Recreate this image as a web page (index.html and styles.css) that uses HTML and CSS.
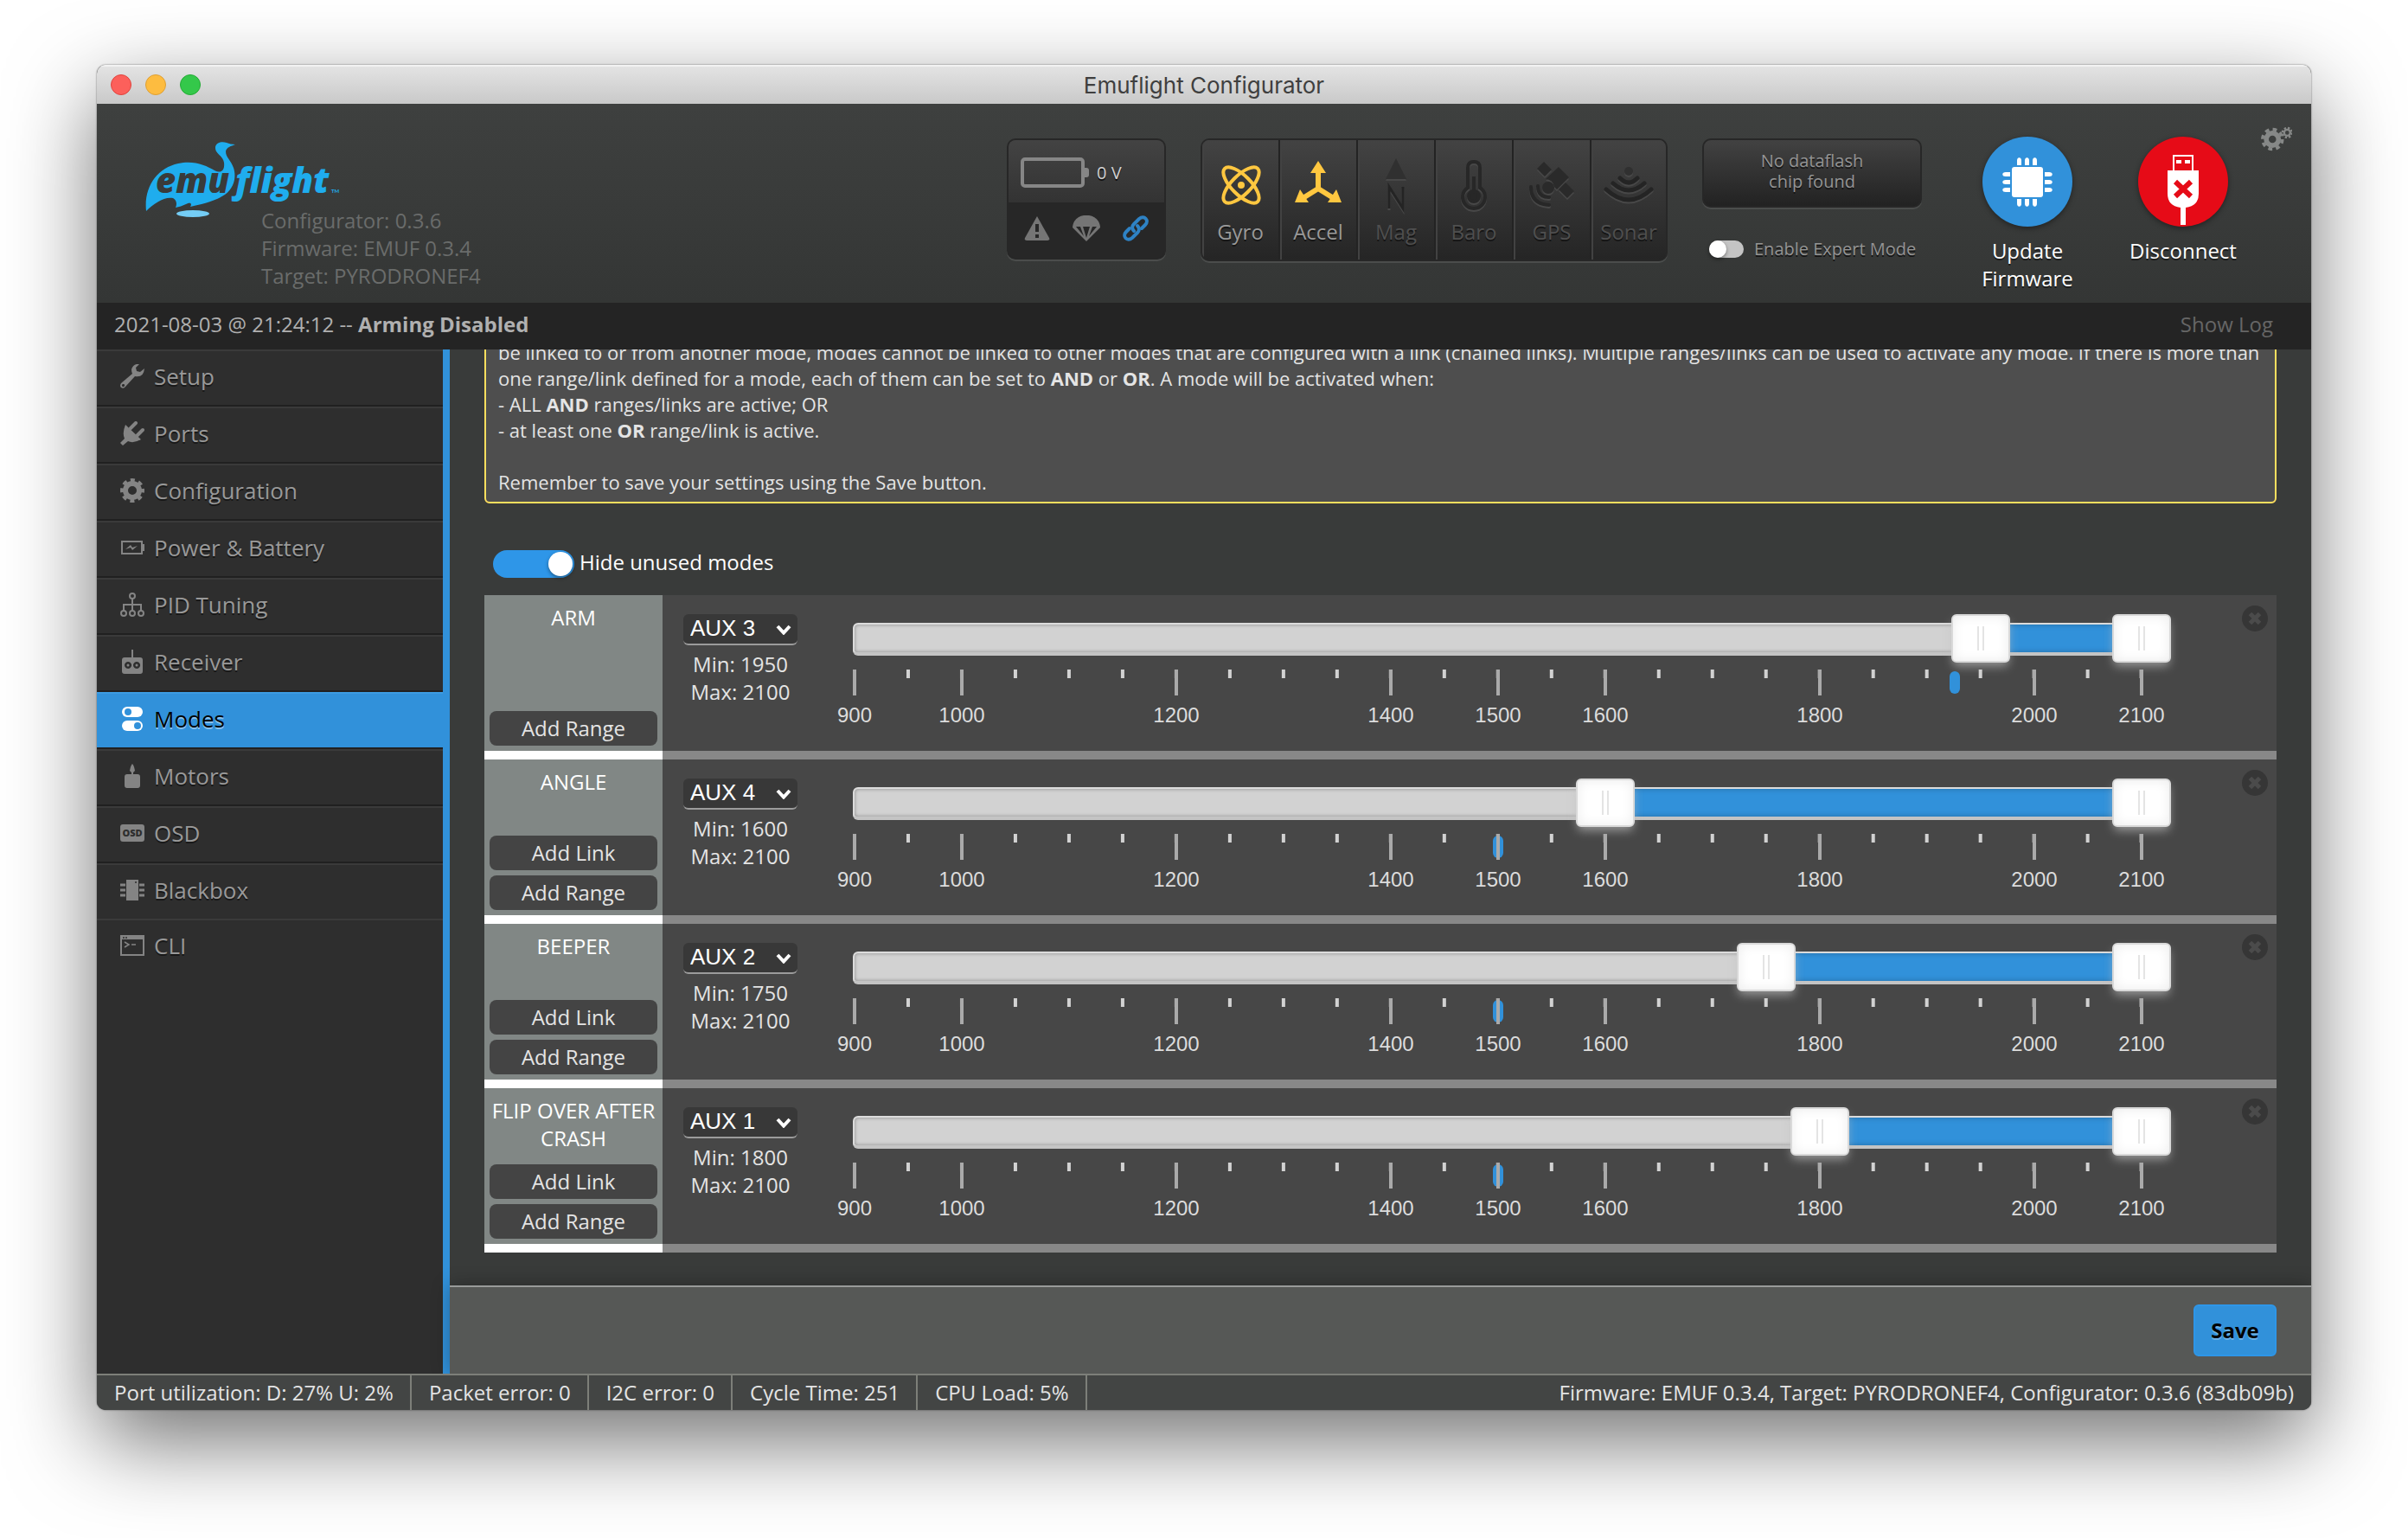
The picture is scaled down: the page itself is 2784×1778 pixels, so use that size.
FILE: index.html
```html
<!DOCTYPE html>
<html lang="en">
<head>
<meta charset="utf-8">
<title>Emuflight Configurator</title>
<link rel="stylesheet" href="styles.css">
</head>
<body>
<svg class="defs" aria-hidden="true">
  <symbol id="icon-delete" viewBox="0 0 30 30"><circle cx="15" cy="15" r="15" fill="#363636"/><path d="M9.500 9.500L20.500 20.500M20.500 9.500L9.500 20.500" stroke="#4b4b4b" stroke-width="5"/></symbol>
  <symbol id="icon-chevron" viewBox="0 0 18 12"><path d="M2 2L9 9.500L16 2" fill="none" stroke="#fff" stroke-width="4"/></symbol>
</svg>
<div class="window">
  <div class="titlebar">
    <span class="light light-close"></span><span class="light light-min"></span><span class="light light-max"></span>
    <span class="window-title">Emuflight Configurator</span>
  </div>

  <header class="header">
    <div class="brand">
      <svg class="logo" viewBox="0 0 230 92" width="230" height="92" role="img" aria-label="emuflight">
        <path fill="#1fadee" d="M1 80C-2 52 14 30 38 25C56 21 70 27 80 33C88 37 92 33 91 24C90 16 81 14 81 7C81 1 88-1 94 1C97 2 100 3 104 3C99 5 94 6 93 11C93 18 99 21 102 30C105 39 104 52 92 61C80 69 64 72 52 75C54 72 53 69 47 72C43 74 39 75 35 76C37 72 36 67 32 65C22 63 10 71 1 80Z"/>
        <ellipse cx="55" cy="83" rx="19" ry="4" fill="#74cdf5"/>
        <text x="12" y="59" class="logo-text logo-dark">emu</text>
        <text x="104" y="59" class="logo-text logo-blue">flight</text>
        <text x="215" y="59" class="logo-tm">TM</text>
      </svg>
      <p class="versions">Configurator: 0.3.6<br>Firmware: EMUF 0.3.4<br>Target: PYRODRONEF4</p>
    </div>

    <div class="battery">
      <div class="battery-level">
        <svg width="80" height="36" viewBox="0 0 80 36"><rect x="2" y="2" width="70" height="31" rx="3" fill="none" stroke="#868686" stroke-width="4"/><path d="M74 12h2q3 0 3 3v5q0 3-3 3h-2z" fill="#868686"/></svg>
        <span>0 V</span>
      </div>
      <div class="battery-flags">
        <svg width="30" height="30" viewBox="0 0 30 30"><path d="M15 1L29 26Q30 29 27 29H3Q0 29 1 26Z" fill="#757575"/><path d="M15 10v9M15 22v4" stroke="#272727" stroke-width="4"/></svg>
        <svg width="32" height="30" viewBox="0 0 32 30"><path d="M0 14C1-5 31-5 32 14L16 30Z" fill="#757575"/><path d="M4 13L13 24L9 13ZM12 13L16 26L20 13ZM23 13L19 24L28 13Z" fill="#272727"/></svg>
        <svg width="30" height="30" viewBox="0 0 30 30" fill="none" stroke="#2e82c4" stroke-width="4" stroke-linecap="round"><path d="M13 18C10 15 11 12 13 10L19 4C25-1 31 6 26 11L22 15"/><path d="M17 12C20 15 19 18 17 20L11 26C5 31-1 24 4 19L8 15"/></svg>
      </div>
    </div>

    <ul class="sensors">
      <li class="sensor sensor-on">
        <svg width="56" height="64" viewBox="0 0 56 64" fill="none" stroke="#ffc740" stroke-width="4"><ellipse cx="29" cy="32" rx="11" ry="27" transform="rotate(45 29 32)"/><ellipse cx="29" cy="32" rx="11" ry="27" transform="rotate(-45 29 32)"/><circle cx="29" cy="32" r="4" fill="#ffc740" stroke="none"/></svg>
        <span>Gyro</span></li>
      <li class="sensor sensor-on">
        <svg width="56" height="64" viewBox="0 0 56 64"><path d="M28 16V37M28 36L12 46M28 36L44 46" stroke="#ffc740" stroke-width="6"/><path d="M28 4L37 18H19ZM1 52L7 37L17 52ZM55 52L49 37L39 52Z" fill="#ffc740"/></svg>
        <span>Accel</span></li>
      <li class="sensor">
        <svg class="engraved" width="56" height="64" viewBox="0 0 56 64"><path d="M28 1L40 25H16Z" fill="#303030"/><path d="M20 59V34L36 59V34" fill="none" stroke="#242424" stroke-width="3"/></svg>
        <span>Mag</span></li>
      <li class="sensor">
        <svg class="engraved" width="56" height="64" viewBox="0 0 56 64" fill="none" stroke="#272727" stroke-width="4"><path d="M21 35V12Q21 5 28 5Q35 5 35 12V35A13 13 0 1 1 21 35Z"/><path d="M28 22V40"/><circle cx="28" cy="45" r="6" fill="#272727"/></svg>
        <span>Baro</span></li>
      <li class="sensor">
        <svg class="engraved" width="56" height="64" viewBox="0 0 56 64" fill="#2a2a2a"><path d="M19 5L28 14L20 22L11 13ZM36 11L48 23L34 37L31 34A10 10 0 0 0 21 25ZM44 29L54 39L46 47L36 37Z"/><circle cx="24" cy="35" r="7"/><g fill="none" stroke="#272727" stroke-width="4" stroke-linecap="round"><path d="M12 33Q12 46 25 46"/><path d="M4 34Q4 54 25 55"/></g></svg>
        <span>GPS</span></li>
      <li class="sensor">
        <svg class="engraved" width="60" height="64" viewBox="0 0 60 64" fill="none" stroke="#242424" stroke-width="5" stroke-linecap="round"><circle cx="30" cy="16" r="5" fill="#303030" stroke="none"/><path d="M20 24Q30 34 40 24M12 30Q30 46 48 30M4 37Q30 61 56 37"/></svg>
        <span>Sonar</span></li>
    </ul>

    <div class="flash-column">
      <div class="dataflash">No dataflash<br>chip found</div>
      <label class="expert"><input type="checkbox" class="switch switch-small">Enable Expert Mode</label>
    </div>

    <button class="round-action" type="button">
      <svg class="disc disc-blue" width="104" height="104" viewBox="0 0 104 104" fill="#fff"><rect x="34" y="35" width="36" height="35" rx="3"/><path d="M40 33V28a2 3 0 0 1 5 0v5zM49 33V28a2 3 0 0 1 5 0v5zM58 33V28a2 3 0 0 1 5 0v5zM40 72v5a2 3 0 0 0 5 0v-5zM49 72v5a2 3 0 0 0 5 0v-5zM58 72v5a2 3 0 0 0 5 0v-5zM32 41h-5a3 2 0 0 0 0 5h5zM32 50h-5a3 2 0 0 0 0 5h5zM32 59h-5a3 2 0 0 0 0 5h5zM72 41h5a3 2 0 0 1 0 5h-5zM72 50h5a3 2 0 0 1 0 5h-5zM72 59h5a3 2 0 0 1 0 5h-5z"/></svg>
      <span>Update<br>Firmware</span>
    </button>
    <button class="round-action" type="button">
      <svg class="disc disc-red" width="104" height="104" viewBox="0 0 104 104"><path d="M40 21H64V39H40Z" fill="#fff"/><path d="M42 23H62V39H42Z" fill="#e60b17"/><path d="M44 27h6v4h-6zM54 27h6v4h-6zM34 39H70V66Q70 80 55 82V102H49V82Q34 80 34 66Z" fill="#fff"/><path d="M43 52L61 69M61 52L43 69" stroke="#e60b17" stroke-width="6"/></svg>
      <span>Disconnect</span>
    </button>
    <button class="options" type="button" aria-label="Options">
      <svg width="36" height="30" viewBox="0 0 38 30" fill="none" stroke="#868887"><circle cx="14" cy="15" r="7.500" stroke-width="6"/><circle cx="14" cy="15" r="12" stroke-width="4" stroke-dasharray="5 4.420"/><circle cx="32" cy="7" r="3.700" stroke-width="2.500"/><circle cx="32" cy="7" r="5.800" stroke-width="2.500" stroke-dasharray="2.500 2.055"/></svg>
    </button>
  </header>

  <div class="log">
    <span>2021-08-03 @ 21:24:12 -- <b>Arming Disabled</b></span>
    <a class="show-log" href="#log">Show Log</a>
  </div>

  <div class="body">
    <nav class="tabs">
      <a class="tab" href="#setup"><svg width="28" height="28" viewBox="0 0 28 28"><path fill="currentColor" fill-rule="evenodd" d="M22 0Q15-1 13 6Q13 9 14 11L1 22Q-1 25 1 27Q4 29 6 26L17 14Q27 16 28 5L23 9L19 8L18 4ZM4 23a1.500 1.500 0 1 1-1 3a1.500 1.500 0 0 1 1-3Z"/></svg>Setup</a>
      <a class="tab" href="#ports"><svg width="28" height="28" viewBox="0 0 28 28"><path fill="currentColor" d="M6 4L24 21Q15 26 9 23L3 28L0 25L5 20Q2 14 6 4Z"/><path d="M12 8L18 2M20 16L26 10" stroke="currentColor" stroke-width="4" stroke-linecap="round"/></svg>Ports</a>
      <a class="tab" href="#configuration"><svg width="28" height="28" viewBox="0 0 28 28" fill="none" stroke="currentColor"><circle cx="14" cy="14" r="8" stroke-width="6"/><circle cx="14" cy="14" r="12" stroke-width="4" stroke-dasharray="5 4.420" stroke-dashoffset="2.500"/></svg>Configuration</a>
      <a class="tab" href="#power"><svg width="28" height="28" viewBox="0 0 28 28"><path fill="none" stroke="currentColor" stroke-width="2" d="M2 7H25V21H2Z"/><path fill="currentColor" d="M26 10h2v8h-2zM6 16L12 11L14 14L20 12L14 17L12 14Z"/></svg>Power &amp; Battery</a>
      <a class="tab" href="#pid"><svg width="28" height="28" viewBox="0 0 28 28" fill="none" stroke="currentColor" stroke-width="2"><circle cx="14" cy="4" r="3"/><circle cx="4" cy="24" r="3"/><circle cx="14" cy="24" r="3"/><circle cx="24" cy="24" r="3"/><path d="M14 7V21M4 21V14H24V21"/></svg>PID Tuning</a>
      <a class="tab" href="#receiver"><svg width="28" height="28" viewBox="0 0 28 28"><path fill="currentColor" fill-rule="evenodd" d="M13 0h2v9h8q3 0 3 3v13q0 3-3 3H5q-3 0-3-3V12q0-3 3-3h8ZM9 14a4 4 0 1 0 .1 0ZM19 14a4 4 0 1 0 .1 0Z"/><circle cx="9" cy="18" r="1.500" fill="currentColor"/><circle cx="19" cy="18" r="1.500" fill="currentColor"/></svg>Receiver</a>
      <a class="tab tab-active" href="#modes"><svg width="28" height="28" viewBox="0 0 28 28"><rect x="2" y="0" width="24" height="12" rx="6" fill="#fff"/><rect x="2" y="16" width="24" height="12" rx="6" fill="#fff"/><circle cx="9" cy="6" r="4" fill="#3191da"/><circle cx="20" cy="22" r="4" fill="#3191da"/></svg>Modes</a>
      <a class="tab" href="#motors"><svg width="28" height="28" viewBox="0 0 28 28"><path fill="currentColor" d="M14 0Q16 2 17 8L15 10V12H20Q23 12 23 15V25Q23 28 20 28H8Q5 28 5 25V15Q5 12 8 12H13V10L11 8Q12 2 14 0Z"/></svg>Motors</a>
      <a class="tab" href="#osd"><svg width="28" height="28" viewBox="0 0 28 28"><rect x="0" y="4" width="28" height="20" rx="3" fill="currentColor"/><text x="14" y="18" text-anchor="middle" class="osd-text">OSD</text></svg>OSD</a>
      <a class="tab tab-flat" href="#blackbox"><svg width="28" height="28" viewBox="0 0 28 28"><path fill="currentColor" d="M7 2H21V26H7Z"/><path d="M0 8h6M0 14h6M0 20h6M22 8h6M22 14h6M22 20h6" stroke="currentColor" stroke-width="3"/><circle cx="18" cy="5" r="1" fill="#2e2e2e"/></svg>Blackbox</a>
      <a class="tab tab-flat" href="#cli"><svg width="28" height="28" viewBox="0 0 28 28"><path fill="none" stroke="currentColor" stroke-width="2" d="M1 3H27V25H1Z"/><path fill="currentColor" d="M1 3H27V7H1Z"/><path d="M5 10L10 13L5 16M13 13h5" fill="none" stroke="currentColor" stroke-width="1.500"/><path d="M3 5h2M6 5h2" stroke="#2e2e2e" stroke-width="1.500"/></svg>CLI</a>
    </nav>

    <main class="content">
      <div class="pane">
        <p class="note">be linked to or from another mode, modes cannot be linked to other modes that are configured with a link (chained links). Multiple ranges/links can be used to activate any mode. If there is more than one range/link defined for a mode, each of them can be set to <b>AND</b> or <b>OR</b>. A mode will be activated when:<br>- ALL <b>AND</b> ranges/links are active; OR<br>- at least one <b>OR</b> range/link is active.<br><br>Remember to save your settings using the Save button.</p>

        <label class="hide-unused"><input type="checkbox" class="switch" checked>Hide unused modes</label>

        <section class="mode">
          <div class="mode-info"><h2>ARM</h2><button type="button">Add Range</button></div>
          <div class="range">
            <div class="channel">
              <div class="select-box"><select aria-label="ARM channel"><option>AUX 3</option></select><svg width="18" height="12"><use href="#icon-chevron"/></svg></div>
              <p>Min: 1950<br>Max: 2100</p>
            </div>
            <div class="scale">
              <div class="slider">
                <div class="track"><div class="fill" style="margin-left:87.500%;width:12.500%"></div></div>
                <input type="range" min="900" max="2100" value="1950" aria-label="ARM minimum"><input type="range" min="900" max="2100" value="2100" aria-label="ARM maximum">
              </div>
              <div class="ruler"><i class="marker" style="left:85.500%"></i>
                <span>900</span><span>1000</span><span>1200</span><span>1400</span><span>1500</span><span>1600</span><span>1800</span><span>2000</span><span>2100</span></div>
            </div>
            <button class="delete" type="button" aria-label="Delete range"><svg width="30" height="30"><use href="#icon-delete"/></svg></button>
          </div>
        </section>

        <section class="mode">
          <div class="mode-info"><h2>ANGLE</h2><button type="button">Add Link</button><button type="button">Add Range</button></div>
          <div class="range">
            <div class="channel">
              <div class="select-box"><select aria-label="ANGLE channel"><option>AUX 4</option></select><svg width="18" height="12"><use href="#icon-chevron"/></svg></div>
              <p>Min: 1600<br>Max: 2100</p>
            </div>
            <div class="scale">
              <div class="slider">
                <div class="track"><div class="fill" style="margin-left:58.333%;width:41.667%"></div></div>
                <input type="range" min="900" max="2100" value="1600" aria-label="ANGLE minimum"><input type="range" min="900" max="2100" value="2100" aria-label="ANGLE maximum">
              </div>
              <div class="ruler"><i class="marker" style="left:50%"></i>
                <span>900</span><span>1000</span><span>1200</span><span>1400</span><span>1500</span><span>1600</span><span>1800</span><span>2000</span><span>2100</span></div>
            </div>
            <button class="delete" type="button" aria-label="Delete range"><svg width="30" height="30"><use href="#icon-delete"/></svg></button>
          </div>
        </section>

        <section class="mode">
          <div class="mode-info"><h2>BEEPER</h2><button type="button">Add Link</button><button type="button">Add Range</button></div>
          <div class="range">
            <div class="channel">
              <div class="select-box"><select aria-label="BEEPER channel"><option>AUX 2</option></select><svg width="18" height="12"><use href="#icon-chevron"/></svg></div>
              <p>Min: 1750<br>Max: 2100</p>
            </div>
            <div class="scale">
              <div class="slider">
                <div class="track"><div class="fill" style="margin-left:70.833%;width:29.167%"></div></div>
                <input type="range" min="900" max="2100" value="1750" aria-label="BEEPER minimum"><input type="range" min="900" max="2100" value="2100" aria-label="BEEPER maximum">
              </div>
              <div class="ruler"><i class="marker" style="left:50%"></i>
                <span>900</span><span>1000</span><span>1200</span><span>1400</span><span>1500</span><span>1600</span><span>1800</span><span>2000</span><span>2100</span></div>
            </div>
            <button class="delete" type="button" aria-label="Delete range"><svg width="30" height="30"><use href="#icon-delete"/></svg></button>
          </div>
        </section>

        <section class="mode">
          <div class="mode-info"><h2>FLIP OVER AFTER CRASH</h2><button type="button">Add Link</button><button type="button">Add Range</button></div>
          <div class="range">
            <div class="channel">
              <div class="select-box"><select aria-label="FLIP OVER AFTER CRASH channel"><option>AUX 1</option></select><svg width="18" height="12"><use href="#icon-chevron"/></svg></div>
              <p>Min: 1800<br>Max: 2100</p>
            </div>
            <div class="scale">
              <div class="slider">
                <div class="track"><div class="fill" style="margin-left:75%;width:25%"></div></div>
                <input type="range" min="900" max="2100" value="1800" aria-label="FLIP OVER AFTER CRASH minimum"><input type="range" min="900" max="2100" value="2100" aria-label="FLIP OVER AFTER CRASH maximum">
              </div>
              <div class="ruler"><i class="marker" style="left:50%"></i>
                <span>900</span><span>1000</span><span>1200</span><span>1400</span><span>1500</span><span>1600</span><span>1800</span><span>2000</span><span>2100</span></div>
            </div>
            <button class="delete" type="button" aria-label="Delete range"><svg width="30" height="30"><use href="#icon-delete"/></svg></button>
          </div>
        </section>
      </div>
      <div class="toolbar"><button class="save" type="button">Save</button></div>
    </main>
  </div>

  <footer class="status">
    <span>Port utilization: D: 27% U: 2%</span><span>Packet error: 0</span><span>I2C error: 0</span><span>Cycle Time: 251</span><span>CPU Load: 5%</span>
    <div class="status-version">Firmware: EMUF 0.3.4, Target: PYRODRONEF4, Configurator: 0.3.6 (83db09b)</div>
  </footer>
</div>
</body>
</html>
```
FILE: styles.css
```css
* { box-sizing: border-box; }
html { height: 100%; }
body {
  margin: 0;
  height: 100%;
  padding: 75px 112px 148px;
  background: #fff;
  color: #e4e4e4;
  font: 24px/32px "Open Sans", "Noto Sans", sans-serif;
}
button, select, input { font: inherit; color: inherit; margin: 0; }
button { border: 0; padding: 0; background: none; cursor: pointer; }
a { color: inherit; text-decoration: none; }
p, h2, ul { margin: 0; padding: 0; }
svg { display: block; flex: none; }
.defs { position: absolute; width: 0; height: 0; }

.window {
  display: flex;
  flex-direction: column;
  height: 100%;
  border-radius: 10px;
  overflow: hidden;
  background: #393b3a;
  box-shadow: 0 0 2px rgba(0, 0, 0, .6), 0 36px 100px rgba(0, 0, 0, .56);
}

/* Title bar */
.titlebar {
  display: grid;
  grid-template-columns: 24px 24px 24px 1fr 120px;
  column-gap: 16px;
  align-items: center;
  height: 45px;
  flex: none;
  padding-left: 16px;
  background: linear-gradient(#e4e4e4, #c9c9c9);
  box-shadow: inset 0 2px #f2f2f2;
}
.light { width: 24px; height: 24px; border-radius: 50%; }
.light-close { background: #fc605b; border: 1px solid #e0443e; }
.light-min { background: #fdbc40; border: 1px solid #dea034; }
.light-max { background: #34c84a; border: 1px solid #24ab35; }
.window-title { padding-top: 2px; color: #3f3f3f; text-align: center; font-family: Inter, sans-serif; font-size: 26px; }

/* Header */
.header {
  display: flex;
  align-items: flex-start;
  height: 230px;
  flex: none;
  padding: 40px 22px 0 56px;
  background: linear-gradient(#3e403f, #343635);
}
.brand { display: grid; margin: 4px auto 0 0; }
.brand > * { grid-area: 1 / 1; }
.logo-text { font: italic 800 40px "Open Sans", sans-serif; }
.logo-dark { fill: #393b3a; }
.logo-blue { fill: #1fadee; }
.logo-tm { font: 700 6px Lato, sans-serif; fill: #1fadee; }
.versions { padding: 75px 0 0 134px; color: #6a6c6b; }

.battery {
  width: 184px;
  height: 140px;
  margin-right: 40px;
  border: 2px solid #272727;
  border-radius: 10px;
  background: #272727;
  box-shadow: 0 2px #4b4d4c;
  overflow: hidden;
}
.battery-level {
  display: flex;
  align-items: center;
  gap: 8px;
  height: 72px;
  padding: 4px 14px 0;
  background: linear-gradient(#434343, #333);
  font-size: 20px;
  color: #d0d0d0;
  text-shadow: 0 2px #111;
}
.battery-flags { display: flex; justify-content: space-between; padding: 15px 18px; }

.sensors {
  display: flex;
  list-style: none;
  height: 142px;
  margin-right: 40px;
  border: 2px solid #272727;
  border-radius: 10px;
  overflow: hidden;
  background: linear-gradient(#434343, #252525);
  box-shadow: 0 2px #4b4d4c;
}
.sensor {
  display: flex;
  flex-direction: column;
  align-items: center;
  width: 90px;
  padding-top: 20px;
  gap: 6px;
  border-right: 2px solid #232323;
  box-shadow: inset 2px 2px #424242;
  color: #4f4f4f;
  text-shadow: 0 2px #151515;
}
.sensor:last-child { width: 86px; border-right: 0; }
.sensor-on { color: #999; }
.engraved { filter: drop-shadow(0 2px #484848); }

.flash-column { width: 254px; margin-right: 32px; font-size: 20px; line-height: 24px; color: #949494; text-shadow: 0 2px #151515; }
.dataflash {
  height: 80px;
  padding-top: 12px;
  border: 2px solid #272727;
  border-radius: 10px;
  background: linear-gradient(#424242, #222);
  box-shadow: 0 2px #4b4d4c;
  text-align: center;
}
.expert { display: flex; align-items: center; gap: 12px; margin: 36px 0 0 8px; white-space: nowrap; }

.switch {
  appearance: none;
  display: flex;
  align-items: center;
  flex: none;
  width: 94px;
  height: 32px;
  padding: 2px;
  border-radius: 16px;
  background: #c4c4c4;
}
.switch::before { content: ""; width: 28px; height: 28px; border-radius: 50%; background: #fff; box-shadow: 0 2px 4px rgba(0, 0, 0, .4); }
.switch:checked { justify-content: flex-end; background: #2e96e8; }
.switch-small { width: 40px; height: 20px; padding: 0; }
.switch-small::before { width: 20px; height: 20px; }

.round-action { display: flex; flex-direction: column; align-items: center; gap: 12px; width: 180px; margin-top: -2px; color: #fff; text-shadow: 0 2px rgba(0, 0, 0, .5); }
.disc { border-radius: 50%; box-shadow: 0 2px 6px rgba(0, 0, 0, .4); }
.disc-blue { background: #3191da; }
.disc-red { background: #e60b17; }
.options { margin-top: -14px; }

/* Log strip */
.log { display: flex; align-items: center; justify-content: space-between; height: 54px; flex: none; padding: 0 44px 4px 20px; background: #242424; color: #b0b0b0; }
.show-log { color: #666; }

/* Sidebar */
.body { display: flex; flex: 1; min-height: 0; }
.tabs { width: 408px; flex: none; background: #2e2e2e; border-right: 8px solid #3191da; }
.tab {
  display: flex;
  align-items: center;
  gap: 11px;
  height: 66px;
  padding: 0 0 4px 27px;
  border-top: 2px solid #3a3a3a;
  border-bottom: 2px solid #202020;
  color: #999;
  font-size: 26px;
  text-shadow: 0 2px #181818;
}
.tab svg { color: #848484; }
.tab-flat { height: 64px; border-bottom: 0; }
.tab-active { background: #3191da; border-top-color: #3c9be2; color: #000; text-shadow: 0 2px rgba(255, 255, 255, .45); }
.osd-text { font: 800 11px "Open Sans", sans-serif; fill: #2e2e2e; text-shadow: none; }

/* Modes page */
.content { display: flex; flex-direction: column; flex: 1; min-width: 0; }
.pane {
  display: flex;
  flex-direction: column;
  justify-content: flex-end;
  flex: 1;
  min-height: 0;
  overflow: hidden;
  padding: 0 40px 38px;
}
.note { flex: none; padding: 8px 14px; border: 2px solid #ffdf5e; border-radius: 6px; background: #4e4e4e; font-size: 22px; line-height: 30px; }
.hide-unused { display: flex; align-items: flex-start; flex: none; gap: 6px; margin: 54px 0 20px 10px; height: 32px; line-height: 28px; color: #fff; }

.mode { display: flex; flex: none; height: 190px; }
.mode-info { display: flex; flex-direction: column; gap: 6px; width: 206px; padding: 10px 6px 6px; background: #818785; border-bottom: 10px solid #fff; }
.mode-info h2 { margin: 0 -6px auto; font-size: 24px; line-height: 32px; font-weight: 400; text-align: center; color: #fff; }
.mode-info button { height: 40px; border-radius: 8px; background: #444; }
.range { display: flex; flex: 1; align-items: flex-start; padding: 22px 10px 0 24px; background: #474747; border-bottom: 10px solid #888; }
.channel { width: 132px; text-align: center; }
.channel p { margin-top: 6px; }
.select-box { display: grid; align-items: center; }
.select-box > * { grid-area: 1 / 1; }
.select-box svg { justify-self: end; margin-right: 7px; pointer-events: none; }
.select-box select {
  appearance: none;
  height: 36px;
  padding: 0 8px 2px;
  border: 0;
  border-bottom: 2px solid #9b9b9b;
  border-radius: 6px;
  background: #383838;
  color: #fff;
  font: 26px "Liberation Sans", Arial, sans-serif;
}

.scale { flex: 1; margin: 0 116px 0 66px; }
.slider { display: grid; align-items: center; }
.slider > * { grid-area: 1 / 1; }
.track {
  display: flex;
  height: 38px;
  margin: 2px -2px 0;
  border: 2px solid #dcdcdc;
  border-bottom: 4px solid #c4c4c4;
  border-radius: 6px;
  background: #d2d2d2;
  box-shadow: inset 0 0 4px rgba(0, 0, 0, .35);
}
.fill { background: #3191da; box-shadow: inset 0 0 6px rgba(0, 0, 0, .25); }
.slider input {
  appearance: none;
  height: 56px;
  margin: 0 -34px;
  background: none;
  pointer-events: none;
}
.slider input::-webkit-slider-thumb {
  appearance: none;
  pointer-events: auto;
  width: 68px;
  height: 56px;
  border: 2px solid #d9d9d9;
  border-radius: 6px;
  background: linear-gradient(90deg, transparent 28px, #e4e4e4 28px 30px, transparent 30px 34px, #e4e4e4 34px 36px, transparent 36px) center / 64px 28px no-repeat, #fff;
  box-shadow: inset 0 0 14px #ebebeb, 0 6px 12px -2px rgba(190, 190, 190, .7);
}
.ruler {
  position: relative;
  display: grid;
  grid-template-columns: repeat(24, 1fr) 0;
  margin-top: 8px;
  font: 24px/32px "Liberation Sans", Arial, sans-serif;
  color: #dcdcdc;
}
/* minor ticks every 50 units */
.ruler::before {
  content: "";
  position: absolute;
  top: 0;
  left: -2px;
  right: -2px;
  height: 10px;
  background: linear-gradient(90deg, #d2d2d2 4px, transparent 4px) 0 0 / calc((100% - 4px) / 24) 10px;
}
.ruler span { position: relative; display: flex; flex-direction: column; align-items: center; width: 0; }
.ruler span::before { content: ""; width: 4px; height: 30px; margin-bottom: 7px; flex: none; background: #aaa; }
.ruler span:nth-of-type(1) { grid-column: 1; }
.ruler span:nth-of-type(2) { grid-column: 3; }
.ruler span:nth-of-type(3) { grid-column: 7; }
.ruler span:nth-of-type(4) { grid-column: 11; }
.ruler span:nth-of-type(5) { grid-column: 13; }
.ruler span:nth-of-type(6) { grid-column: 15; }
.ruler span:nth-of-type(7) { grid-column: 19; }
.ruler span:nth-of-type(8) { grid-column: 23; }
.ruler span:nth-of-type(9) { grid-column: 25; }
.marker { position: absolute; top: 2px; width: 12px; height: 26px; margin-left: -6px; border-radius: 6px; background: #3191da; }
.delete { margin: -10px 0 0; }

.toolbar { display: flex; justify-content: flex-end; flex: none; padding: 20px 40px; border-top: 2px solid #999b9a; background: #565856; box-shadow: 0 0 20px rgba(0, 0, 0, .3); }
.save { width: 96px; height: 60px; border: 2px solid #2e96e8; border-radius: 6px; background: #3191da; color: #000; font-weight: 700; text-shadow: 0 2px rgba(255, 255, 255, .3); }

/* Status bar */
.status { display: flex; flex: none; height: 42px; border-top: 2px solid #7d7f79; background: #434544; line-height: 40px; }
.status span { padding: 0 19px 0 20px; border-right: 2px solid #7d7f79; }
.status-version { margin-left: auto; padding-right: 20px; }
```
